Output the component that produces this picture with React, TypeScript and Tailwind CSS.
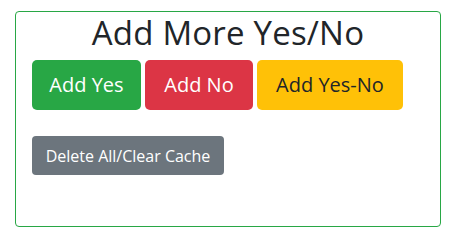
export default function App() {
  return (
    <div className="min-h-screen bg-white pt-[11px] pl-[15px] font-['Open_Sans',sans-serif]">
      <div className="w-[426px] h-[216px] border border-[#28a745] rounded-[4px] px-4">
        {/* Title */}
        <h1 className="text-center text-[33px] leading-[38px] font-medium text-[#212529] mt-[2px] tracking-[0.2px]">
          Add More Yes/No
        </h1>

        {/* Add buttons */}
        <div className="flex gap-[4px] mt-[8px]">
          <button className="h-[50px] w-[109px] rounded-[5px] bg-[#28a745] text-white text-[20px]">
            Add Yes
          </button>
          <button className="h-[50px] w-[108px] rounded-[5px] bg-[#dc3545] text-white text-[20px]">
            Add No
          </button>
          <button className="h-[50px] w-[146px] rounded-[5px] bg-[#ffc107] text-[#212529] text-[20px]">
            Add Yes-No
          </button>
        </div>

        {/* Clear */}
        <button className="mt-[26px] h-[39px] w-[192px] rounded-[4px] bg-[#6c757d] text-white text-[16px]">
          Delete All/Clear Cache
        </button>
      </div>
    </div>
  )
}
